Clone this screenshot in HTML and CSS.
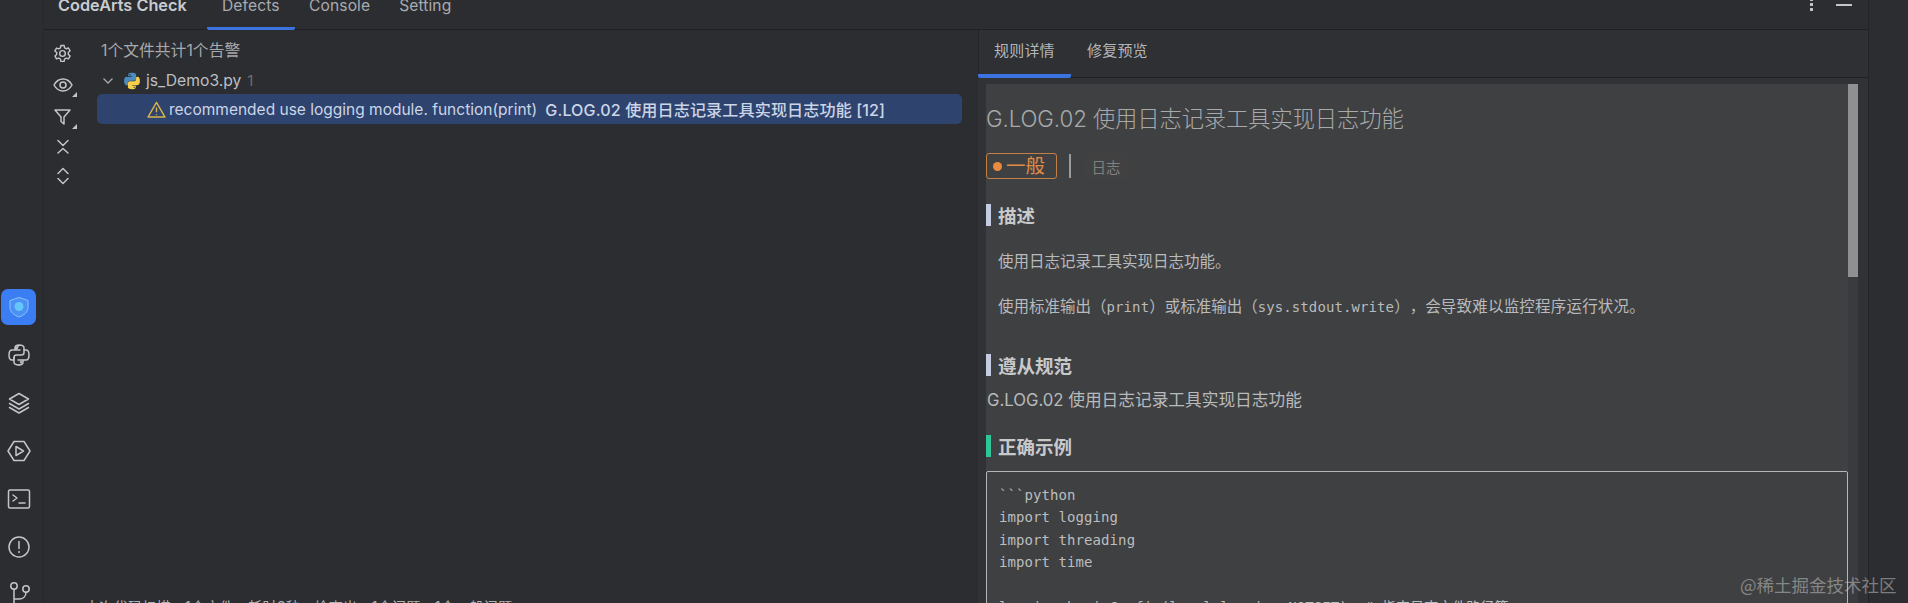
FILE: index.html
```html
<!DOCTYPE html>
<html lang="zh">
<head>
<meta charset="utf-8">
<title>CodeArts Check</title>
<link rel="stylesheet" href="styles.css">
</head>
<body>
<div class="app">
  <nav class="rail">
    <div class="rail-btn active">
      <svg viewBox="0 0 24 24" width="24" height="24"><path d="M12 2.500l9 3v7c0 4.500-4 7.800-9 9.500-5-1.700-9-5-9-9.500v-7z" fill="#5aa2f7" fill-opacity=".55" stroke="#8cc4fb" stroke-width="1"/><circle cx="12" cy="11.500" r="4.500" fill="#66c6f8"/></svg>
    </div>
    <div class="rail-btn">
      <svg viewBox="0 0 24 24" width="24" height="24" class="ico"><path d="M12 2C8.500 2 8 3.500 8 5v2h5M8 7H5c-2 0-3 2-3 5s1.200 5 3 5h2v-2.500c0-1.500 1-2.500 2.500-2.500h5c1.500 0 2.500-1 2.500-2.500V5c0-1.500-1.500-3-5-3z"/><path d="M12 22c3.500 0 4-1.500 4-3v-2h-5M16 17h3c2 0 3-2 3-5s-1.200-5-3-5h-2"/><path d="M7 14.500V19c0 1.500 1.500 3 5 3"/><circle cx="10" cy="4.800" r=".5"/><circle cx="14" cy="19.200" r=".5"/></svg>
    </div>
    <div class="rail-btn">
      <svg viewBox="0 0 24 24" width="24" height="24" class="ico"><path d="M12 2.500l9.500 5.500-9.500 5.500L2.500 8z"/><path d="M2.500 12.500l9.500 5.500 9.500-5.500"/><path d="M2.500 16.500l9.500 5.500 9.500-5.500"/></svg>
    </div>
    <div class="rail-btn">
      <svg viewBox="0 0 24 24" width="24" height="24" class="ico"><path d="M7 2.500h10l6 9.500-6 9.500H7L1 12z"/><path d="M9 7.500l7.500 4.500L9 16.500z"/></svg>
    </div>
    <div class="rail-btn">
      <svg viewBox="0 0 24 24" width="24" height="24" class="ico"><rect x="1.500" y="3" width="21" height="18" rx="1.500"/><path d="M6 8l4 3-4 3M12 16h6"/></svg>
    </div>
    <div class="rail-btn">
      <svg viewBox="0 0 24 24" width="24" height="24" class="ico"><circle cx="12" cy="12" r="10"/><path d="M12 6.500v7M12 16.500v1"/></svg>
    </div>
    <div class="rail-btn git">
      <svg viewBox="0 0 24 24" width="24" height="24" class="ico"><circle cx="7" cy="5" r="3.200"/><circle cx="19" cy="8" r="3.200"/><path d="M7 8.200V24M7 18h5c4 0 7-2.500 7-6.800"/></svg>
    </div>
  </nav>

  <main class="panel">
    <header class="panel-head">
      <strong class="brand">CodeArts Check</strong>
      <div class="tab on">Defects</div>
      <div class="tab">Console</div>
      <div class="tab">Setting</div>
      <div class="head-actions">
        <span class="kebab"></span>
        <span class="minus"></span>
      </div>
    </header>

    <div class="panel-body">
      <aside class="tools">
        <svg viewBox="0 0 20 20" width="19" height="19" class="ico"><path d="M8.300 1.500h3.400l.5 2.500 1.700 1 2.400-.8 1.700 3-1.900 1.700v2l1.900 1.700-1.700 3-2.400-.8-1.700 1-.5 2.500H8.300l-.5-2.500-1.700-1-2.400.8-1.700-3L3.900 11V9L2 7.300l1.700-3 2.400.8 1.700-1z"/><circle cx="10" cy="10" r="3"/></svg>
        <span class="tool-corner">
          <svg viewBox="0 0 20 20" width="20" height="20" class="ico"><path d="M1 10c2.200-4 5.200-6 9-6s6.800 2 9 6c-2.200 4-5.200 6-9 6s-6.800-2-9-6z"/><circle cx="10" cy="10" r="3"/></svg>
        </span>
        <span class="tool-corner">
          <svg viewBox="0 0 20 20" width="20" height="20" class="ico"><path d="M2 3h15l-6 7v7l-3-2.500V10z"/></svg>
        </span>
        <svg viewBox="0 0 14 16" width="14" height="16" class="ico"><path d="M2 1.500l5 5 5-5M2 14l5-4.500 5 4.500"/></svg>
        <svg viewBox="0 0 14 18" width="14" height="18" class="ico"><path d="M2 6.500l5-5 5 5M2 11.500l5 5 5-5"/></svg>
      </aside>

      <section class="tree">
        <div class="summary">1个文件共计1个告警</div>
        <div class="file-row">
          <svg viewBox="0 0 12 8" width="12" height="8" class="chev"><path d="M1.500 1.500L6 6l4.500-4.500"/></svg>
          <svg viewBox="0 0 24 24" width="18" height="18" class="py">
            <path fill="#4b8bbe" fill-rule="evenodd" d="M11.900 1C6.600 1 7 3.300 7 3.300v2.500h5v.7H5S1.500 6.100 1.500 11.900s3.100 5.600 3.100 5.600h1.900v-2.700s-.1-3.100 3-3.100h5.100s2.900 0 2.900-2.800V3.900S18 1 11.900 1zM9.100 2.700a.9.900 0 1 1 0 1.800.9.900 0 0 1 0-1.800z"/>
            <path fill="#f7cf4a" fill-rule="evenodd" transform="rotate(180 12 12)" d="M11.900 1C6.600 1 7 3.300 7 3.300v2.500h5v.7H5S1.500 6.100 1.500 11.900s3.100 5.600 3.100 5.600h1.900v-2.700s-.1-3.100 3-3.100h5.100s2.900 0 2.900-2.800V3.900S18 1 11.900 1zM9.100 2.700a.9.900 0 1 1 0 1.800.9.900 0 0 1 0-1.800z"/>
          </svg>
          <span class="fname">js_Demo3.py</span>
          <span class="fcount">1</span>
        </div>
        <div class="issue-row">
          <svg viewBox="0 0 20 18" width="19" height="17" class="warn"><path d="M10 1.500L19 17H1z"/><path d="M10 7v5M10 14v1.200"/></svg>
          <span class="issue-msg">recommended use logging module. function(print)</span>
          <span class="issue-rule">G.LOG.02 使用日志记录工具实现日志功能 [12]</span>
        </div>
        <div class="stats">本次代码扫描：1个文件，耗时3秒，检查出：1个问题，1个一般问题</div>
      </section>

      <section class="detail">
        <div class="detail-tabs">
          <div class="dtab on">规则详情</div>
          <div class="dtab">修复预览</div>
        </div>
        <div class="detail-frame">
          <article class="doc">
            <h1 class="doc-title">G.LOG.02 使用日志记录工具实现日志功能</h1>
            <div class="tags">
              <span class="sev"><i class="sev-dot"></i>一般</span>
              <span class="tag-sep"></span>
              <span class="tag">日志</span>
            </div>
            <h2 class="sec">描述</h2>
            <p class="para first">使用日志记录工具实现日志功能。</p>
            <p class="para">使用标准输出（<span class="mono">print</span>）或标准输出（<span class="mono">sys.stdout.write</span>），<span class="tail">会导致难以监控程序运行状况。</span></p>
            <h2 class="sec follow">遵从规范</h2>
            <p class="std">G.LOG.02 使用日志记录工具实现日志功能</p>
            <h2 class="sec good">正确示例</h2>
            <pre class="code">```python
import logging
import threading
import time

logging.basicConfig(level=logging.NOTSET)  # 指定日志文件路径等</pre>
          </article>
          <div class="scroll"><div class="thumb"></div></div>
        </div>
      </section>
    </div>
  </main>
  <div class="gutter"></div>
</div>
<div class="watermark">@稀土掘金技术社区</div>
</body>
</html>
```
FILE: styles.css
```css
* { box-sizing: border-box; }
html, body { margin: 0; height: 603px; overflow: hidden; background: #2b2d30; }
body { font-family: Inter, "Noto Sans CJK SC", sans-serif; color: #bcbec4; position: relative; }
.app { display: flex; width: 1908px; height: 603px; }

.ico { fill: none; stroke: #c3c5c9; stroke-width: 1.500; stroke-linejoin: round; stroke-linecap: round; display: block; }

.rail { width: 44px; flex: none; border-right: 1px solid #27282b; display: flex; flex-direction: column; align-items: flex-start; padding: 289px 0 0 1px; gap: 12px; }
.rail-btn { width: 35px; height: 36px; display: flex; align-items: center; justify-content: center; border-radius: 7px; flex: none; }
.rail-btn.active { background: #3b7df2; }
.rail-btn.git { align-items: flex-start; margin-top: -2px; padding-top: 6px; }

.panel { width: 1825px; flex: none; display: flex; flex-direction: column; border-right: 1px solid #232427; }
.panel-head { height: 30px; flex: none; border-bottom: 1px solid #1f2023; display: flex; align-items: flex-end; padding-left: 14px; }
.brand { font-size: 16.300px; line-height: 20px; font-weight: 600; color: #c9cbd0; width: 149px; margin-bottom: 14px; white-space: nowrap; }
.tab { font-size: 15.600px; line-height: 20px; color: #a9abb0; padding: 0 14.500px 11px; height: 34px; border-bottom: 3px solid transparent; margin-bottom: -1px; letter-spacing: .1px; }
.tab.on { border-bottom-color: #3b74e0; border-radius: 0 0 2px 2px; padding: 0 15px 11px; }
.head-actions { margin-left: auto; display: flex; align-items: center; gap: 23px; padding-right: 16px; height: 29px; padding-bottom: 19px; }
.kebab { width: 3px; height: 14px; background: radial-gradient(circle at 50% 1.500px, #c3c5c9 1.400px, transparent 1.600px) 0 0 / 3px 5px repeat-y; }
.minus { width: 16px; height: 1.500px; background: #c3c5c9; }

.panel-body { flex: 1; display: flex; min-height: 0; }
.tools { width: 37px; flex: none; display: flex; flex-direction: column; align-items: center; padding-top: 14px; gap: 12px; }
.tool-corner { display: block; position: relative; }
.tool-corner::after { content: ""; position: absolute; right: -4px; bottom: -2px; border-style: solid; border-width: 0 0 5px 5px; border-color: transparent transparent #c3c5c9 transparent; }

.tree { width: 897px; flex: none; padding: 0 0 0 16px; display: flex; flex-direction: column; }
.summary { font-size: 15.800px; line-height: 20px; padding: 11px 0 0 4px; color: #a7a9ad; height: 39px; white-space: nowrap; }
.file-row { display: flex; align-items: center; height: 25px; padding: 0 0 2px 5px; }
.chev { fill: none; stroke: #a7a9ad; stroke-width: 1.300; margin-right: 9px; flex: none; }
.py { margin-right: 5px; flex: none; }
.fname { font-size: 15.700px; color: #bcbec4; }
.fcount { font-size: 15px; color: #6b6d72; margin-left: 6px; }
.issue-row { width: 865px; height: 30px; flex: none; background: #2e436e; border-radius: 5px; display: flex; align-items: center; padding-left: 50px; font-size: 15.500px; white-space: nowrap; color: #ccd5e6; }
.warn { fill: none; stroke: #d6b54a; stroke-width: 1.500; stroke-linejoin: round; flex: none; }
.issue-msg { margin-left: 3px; }
.issue-rule { margin-left: 8px; font-size: 16.100px; font-weight: 500; letter-spacing: .1px; }
.stats { margin: auto 0 0 -12px; font-size: 14px; line-height: 14px; height: 3px; white-space: nowrap; color: #b0b2b6; letter-spacing: .3px; }

.detail { flex: 1; min-width: 0; display: flex; flex-direction: column; background: #2e3033; box-shadow: inset 1px 0 0 #232427; }
.detail-tabs { height: 48px; flex: none; display: flex; border-bottom: 1px solid #1f2023; }
.dtab { width: 93px; font-size: 15px; line-height: 20px; padding: 11px 0 0 16px; color: #b4b6ba; letter-spacing: .2px; height: 48px; border-bottom: 4px solid transparent; }
.dtab.on { border-bottom-color: #3b74e0; border-radius: 0 0 2px 2px; }
.detail-frame { flex: 1; min-height: 0; display: flex; padding: 6px 9px 0 8px; background: #313235; overflow: hidden; }
.doc { width: 862px; flex: none; background: #3f4042; overflow: hidden; }
.doc-title { margin: 0; font-size: 22.300px; font-weight: 300; line-height: 30px; padding: 20px 0 0; color: #a8a9ab; white-space: nowrap; letter-spacing: -.1px; }
.tags { display: flex; align-items: center; margin-top: 19px; height: 26px; }
.sev { width: 71px; height: 26px; border: 1.500px solid #c47f45; border-radius: 3px; color: #e08c44; font-size: 19.500px; line-height: 23px; display: flex; align-items: center; padding-left: 6px; gap: 4px; }
.sev-dot { width: 9px; height: 9px; border-radius: 50%; background: #ea8a3f; }
.tag-sep { width: 1.500px; height: 24px; background: #9a9b9d; margin-left: 12px; }
.tag { font-size: 14.500px; color: #7f8082; background: #414141; padding: 2px 7px; margin-left: 14px; }
.sec { margin: 25px 0 0; height: 22px; border-left: 5px solid #c5cbe0; padding-left: 7px; font-size: 18.500px; line-height: 24px; font-weight: 700; color: #c8c9cb; }
.sec.follow { margin-top: 14px; }
.sec.good { margin-top: 23px; border-left-color: #2fc79a; }
.para { margin: 0; padding-left: 12px; font-size: 15.500px; line-height: 24px; color: #b9babc; white-space: nowrap; height: 45px; text-spacing-trim: space-all; }
.para.first { margin-top: 24px; }
.mono { font-family: "DejaVu Sans Mono", monospace; font-size: 14px; letter-spacing: .1px; }
.tail { letter-spacing: .2px; }
.std { margin: 12px 0 0; padding-left: 1px; font-size: 16.700px; line-height: 24px; height: 24px; color: #b9babc; white-space: nowrap; }
.code { margin: 14px 0 0; height: 200px; border: 1.500px solid #b5b6b8; border-radius: 2px; padding: 12px; font-family: "DejaVu Sans Mono", "Noto Sans CJK SC", monospace; font-size: 14px; line-height: 22.400px; letter-spacing: .08px; color: #bcbdbf; }
.scroll { width: 10px; flex: none; background: #3a3b3e; }
.thumb { height: 193px; background: #8f9092; }
.gutter { flex: 1; }

.watermark { position: absolute; left: 1740px; top: 573px; font-family: "Noto Sans CJK SC", sans-serif; font-size: 17.500px; line-height: 24px; color: rgba(205, 205, 205, .5); white-space: nowrap; }
```
